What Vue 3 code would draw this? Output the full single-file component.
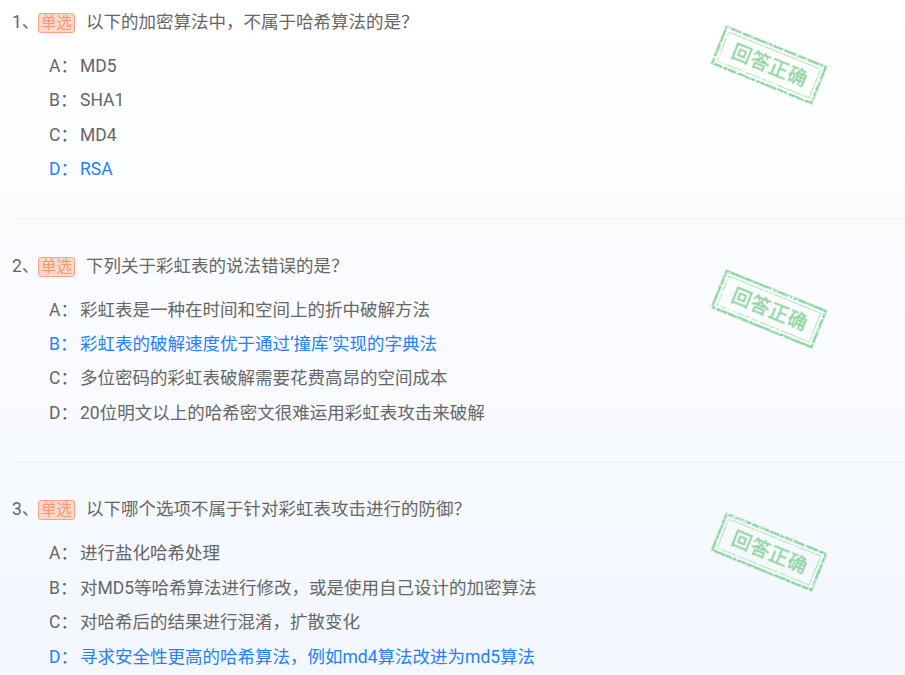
<script setup>
const questions = [
  { n: 1, title: '以下的加密算法中，不属于哈希算法的是？', right: 3, opts: ['MD5', 'SHA1', 'MD4', 'RSA'] },
  { n: 2, title: '下列关于彩虹表的说法错误的是？', right: 1, opts: ['彩虹表是一种在时间和空间上的折中破解方法', '彩虹表的破解速度优于通过‘撞库’实现的字典法', '多位密码的彩虹表破解需要花费高昂的空间成本', '20位明文以上的哈希密文很难运用彩虹表攻击来破解'] },
  { n: 3, title: '以下哪个选项不属于针对彩虹表攻击进行的防御？', right: 3, opts: ['进行盐化哈希处理', '对MD5等哈希算法进行修改，或是使用自己设计的加密算法', '对哈希后的结果进行混淆，扩散变化', '寻求安全性更高的哈希算法，例如md4算法改进为md5算法'] },
]
const letters = ['A', 'B', 'C', 'D']
</script>

<template>
  <div class="page">
    <section v-for="q in questions" :key="q.n" class="question">
      <div class="title">
        <span class="num">{{ q.n }}、</span>
        <span class="tag">单选</span>
        <span class="text">{{ q.title }}</span>
      </div>
      <ul class="opts">
        <li v-for="(o, i) in q.opts" :key="i" :class="{ right: i === q.right }">
          <span class="letter">{{ letters[i] }}：</span><span>{{ o }}</span>
        </li>
      </ul>
      <svg class="stamp" width="130" height="100" viewBox="0 0 130 100">
        <defs>
          <filter :id="'rough' + q.n" x="-10%" y="-20%" width="120%" height="140%">
            <feTurbulence type="fractalNoise" baseFrequency="0.4" numOctaves="2" :seed="q.n * 3" result="n" />
            <feDisplacementMap in="SourceGraphic" in2="n" scale="1" result="d" />
            <feColorMatrix in="n" type="matrix" values="0 0 0 0 0  0 0 0 0 0  0 0 0 0 0  0 0 0 6 -1.8" result="holes" />
            <feComposite in="d" in2="holes" operator="in" result="c" />
            <feGaussianBlur in="c" stdDeviation="0.35" />
          </filter>
          <filter :id="'soft' + q.n" x="-10%" y="-20%" width="120%" height="140%">
            <feGaussianBlur stdDeviation="0.3" />
          </filter>
        </defs>
        <g transform="rotate(22 65 50)">
          <g :filter="`url(#rough${q.n})`" fill="none">
            <rect x="11.5" y="30.5" width="107" height="39" stroke="#7ccd8f" stroke-width="2.2" />
            <rect x="15.5" y="34.5" width="99" height="31" stroke="#aee2ba" stroke-width="1" />
          </g>
          <text x="66" y="57" text-anchor="middle" class="stamp-text" :filter="`url(#soft${q.n})`">回答正确</text>
        </g>
      </svg>
    </section>
  </div>
</template>

<style>
html, body { margin: 0; padding: 0; overflow: hidden; }
</style>

<style scoped>
.page {
  width: 905px;
  height: 675px;
  overflow: hidden;
  box-sizing: border-box;
  padding-left: 12px;
  background: linear-gradient(180deg, #ffffff 0%, #f3f7fe 100%);
  font-family: Roboto, "Noto Sans CJK SC", sans-serif;
  font-size: 17.5px;
  color: #666;
}
.question {
  position: relative;
  height: 219px;
  margin-bottom: 24.7px;
  box-sizing: border-box;
  padding-top: 10px;
  border-bottom: 1px dotted #e6eaef;
}
.title {
  display: flex;
  align-items: center;
  height: 24px;
  line-height: 24px;
}
.num { width: 26px; flex: none; }
.tag {
  box-sizing: border-box;
  width: 37px;
  height: 20px;
  line-height: 18px;
  margin-right: 11px;
  flex: none;
  text-align: center;
  font-size: 15.4px;
  color: #ff9672;
  background: #ffd8ca;
  border: 1px solid #ffa285;
  border-radius: 3px;
  position: relative;
  top: 1px;
}
.opts {
  list-style: none;
  margin: 0;
  padding: 15px 0 0 37px;
}
.opts li {
  height: 34.4px;
  line-height: 34.4px;
  display: flex;
}
.letter { width: 31px; flex: none; white-space: nowrap; }
.opts li.right { color: #2680ff; }
.stamp {
  position: absolute;
  left: 692px;
  top: 15px;
}
.stamp-text {
  font-size: 19.5px;
  fill: #8fd29f;
  stroke: #8fd29f;
  stroke-width: 0.35px;
  letter-spacing: 0.5px;
}
</style>
